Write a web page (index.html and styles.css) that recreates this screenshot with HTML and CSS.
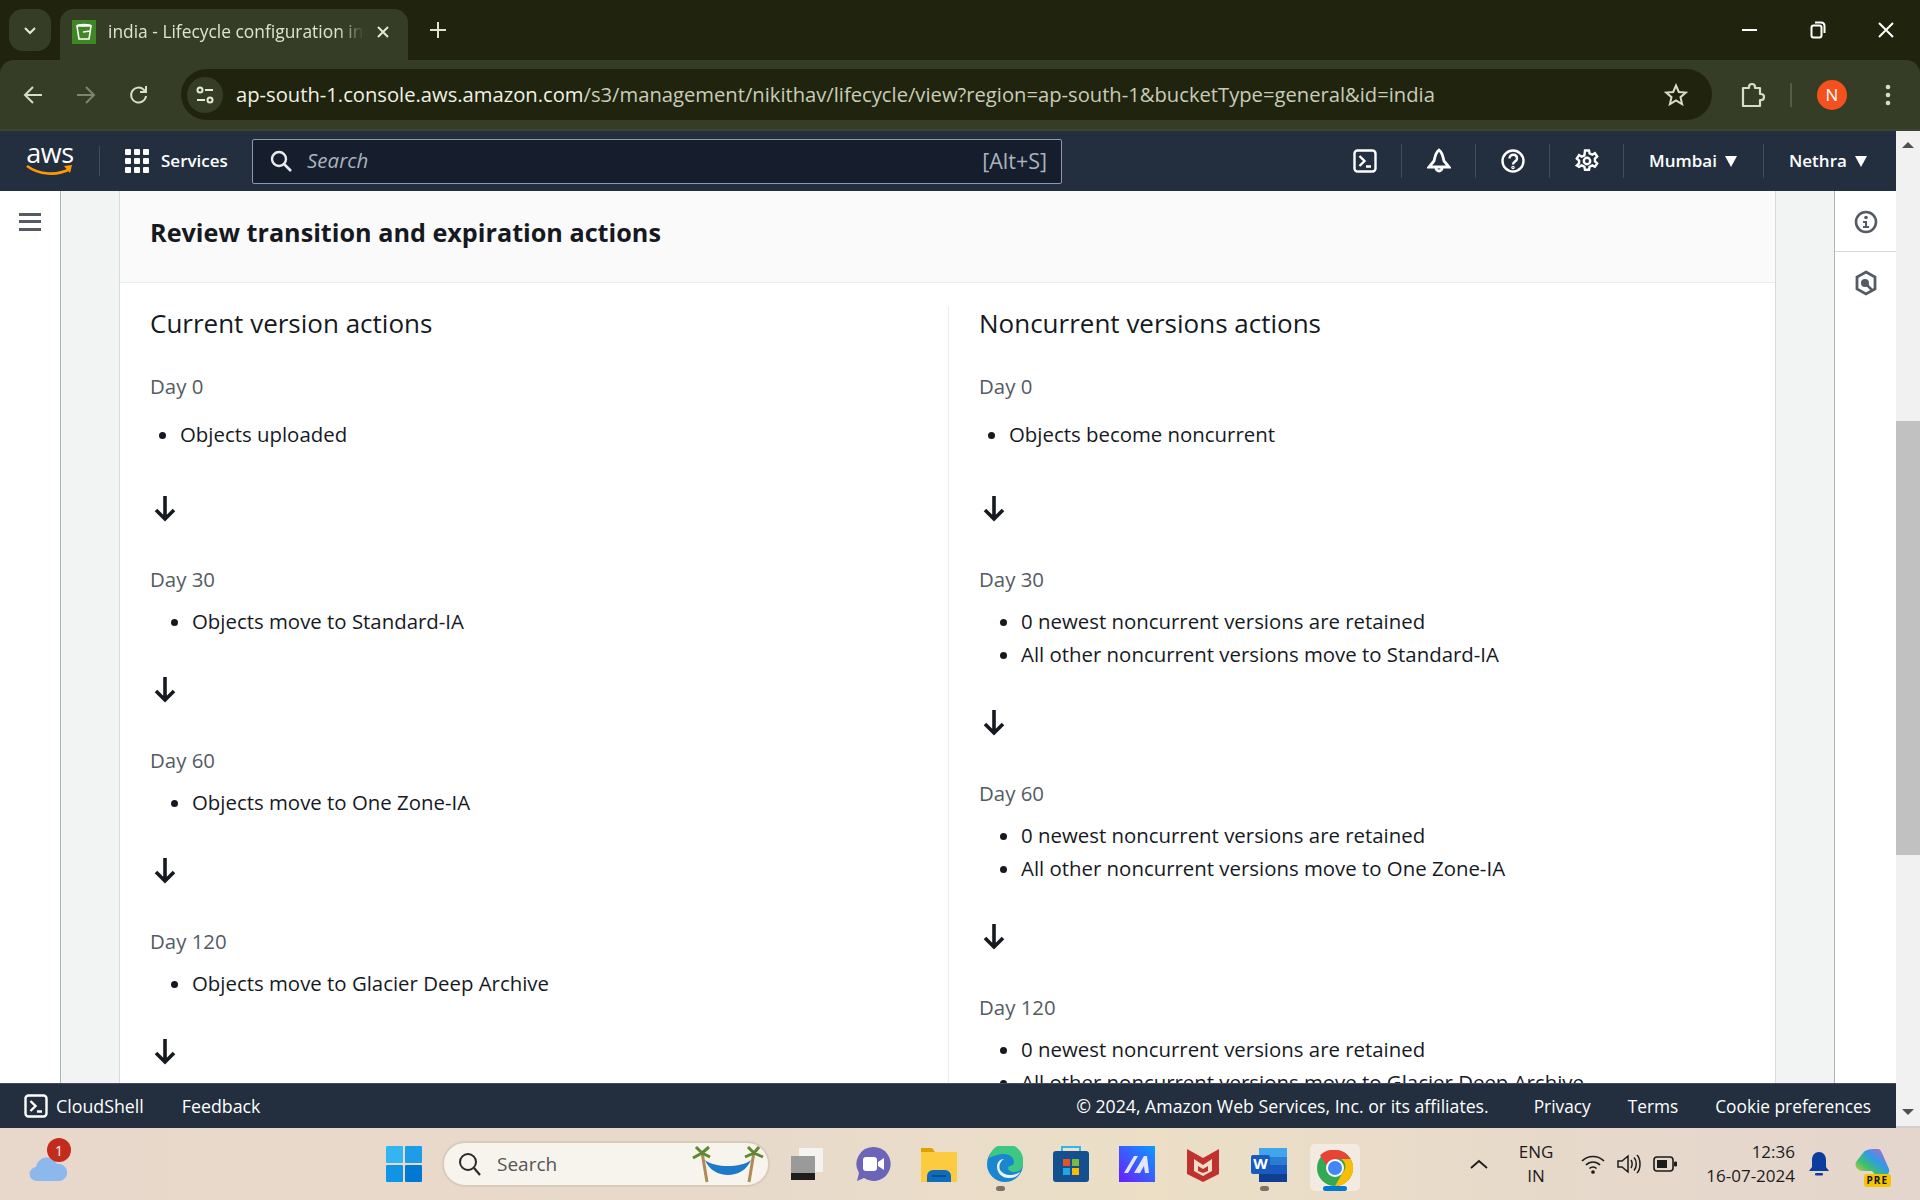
FILE: index.html
```html
<!DOCTYPE html>
<html lang="en">
<head>
  <meta charset="UTF-8">
  <title>india - Lifecycle configuration in S3</title>
  <link rel="stylesheet" href="styles.css">
</head>
<body>
  <div class="screen">
    <!-- browser tabs -->
    <div class="tabstrip">
      <div class="tab-search"><svg width="16" height="16" viewBox="0 0 16 16"><path d="M3 6l5 5 5-5" fill="none" stroke="#e6e8d8" stroke-width="2"/></svg></div>
      <div class="tab">
        <svg class="favicon" width="24" height="24" viewBox="0 0 24 24"><rect width="24" height="24" fill="#3f8624"/><path d="M5 6h14l-2 13H7zM5 6c0-2 14-2 14 0M11 12l7-1" fill="none" stroke="#fff" stroke-width="1.6"/></svg>
        <span class="tab-title">india - Lifecycle configuration in S3</span>
        <svg class="tab-close" width="14" height="14" viewBox="0 0 14 14"><path d="M2 2l10 10M12 2L2 12" stroke="#e6e8d8" stroke-width="2"/></svg>
      </div>
      <svg class="new-tab" width="18" height="18" viewBox="0 0 18 18"><path d="M9 1v16M1 9h16" stroke="#dfe2cf" stroke-width="2"/></svg>
      <div class="window-btns">
        <svg width="16" height="16" viewBox="0 0 16 16"><path d="M0 8h15" stroke="#fff" stroke-width="2"/></svg>
        <svg width="16" height="18" viewBox="0 0 16 18"><rect x="1.500" y="4.500" width="10" height="12" rx="2" fill="none" stroke="#fff" stroke-width="2"/><path d="M5 1.500h6c2 0 3.500 1.500 3.500 3.500v7" fill="none" stroke="#fff" stroke-width="2"/></svg>
        <svg width="16" height="16" viewBox="0 0 16 16"><path d="M1 1l14 14M15 1L1 15" stroke="#fff" stroke-width="2"/></svg>
      </div>
    </div>

    <!-- browser toolbar -->
    <div class="toolbar">
      <svg class="tool-back" width="20" height="20" viewBox="0 0 20 20"><path d="M19 10H2M10 2l-8 8 8 8" fill="none" stroke="#d9dcc8" stroke-width="2"/></svg>
      <svg class="tool-forward" width="20" height="20" viewBox="0 0 20 20"><path d="M1 10h17M10 2l8 8-8 8" fill="none" stroke="#80856f" stroke-width="2"/></svg>
      <svg class="tool-reload" width="20" height="20" viewBox="0 0 20 20"><path d="M17 11a7.500 7.500 0 1 1-2.200-6.300L17 7M17 1v6h-6" fill="none" stroke="#d9dcc8" stroke-width="2"/></svg>
      <div class="urlbar">
        <div class="site-info"><svg width="20" height="20" viewBox="0 0 20 20" fill="none" stroke="#e6e8d8" stroke-width="2"><circle cx="5" cy="5" r="2.500"/><path d="M10 5h8M2 15h8"/><circle cx="15" cy="15" r="2.500"/></svg></div>
        <span class="url">ap-south-1.console.aws.amazon.com<span class="url-path">/s3/management/nikithav/lifecycle/view?region=ap-south-1&amp;bucketType=general&amp;id=india</span></span>
        <svg class="star" width="24" height="24" viewBox="0 0 24 24"><path d="M12 2.500l2.800 6.500 7 .6-5.300 4.600 1.600 6.900-6.100-3.700-6.100 3.700 1.600-6.900-5.300-4.600 7-.6z" fill="none" stroke="#d9dcc8" stroke-width="2"/></svg>
      </div>
      <svg class="puzzle" width="26" height="26" viewBox="0 0 26 26"><path d="M4 6h6V5a3 3 0 0 1 6 0v1h5v6h1a3 3 0 0 1 0 6h-1v6H4z" fill="none" stroke="#d9dcc8" stroke-width="2.200" stroke-linejoin="round"/></svg>
      <span class="tool-sep"></span>
      <span class="avatar">N</span>
      <svg class="kebab" width="6" height="24" viewBox="0 0 6 24" fill="#d9dcc8"><circle cx="3" cy="4" r="2.300"/><circle cx="3" cy="12" r="2.300"/><circle cx="3" cy="20" r="2.300"/></svg>
    </div>

    <div class="viewport">
      <div class="app">
        <!-- aws top nav -->
        <header class="topnav">
          <div class="aws-logo">
            <span class="aws-word">aws</span>
            <svg width="50" height="13" viewBox="0 0 50 13"><path d="M2 2c12 9 30 10 43 3" fill="none" stroke="#ff9900" stroke-width="2.600"/><path d="M39 2l8-1-2 8z" fill="#ff9900"/></svg>
          </div>
          <span class="nav-sep logo-sep"></span>
          <svg class="grid-icon" width="24" height="24" viewBox="0 0 24 24" fill="#fff"><rect width="6" height="6" rx="1"/><rect x="9" width="6" height="6" rx="1"/><rect x="18" width="6" height="6" rx="1"/><rect y="9" width="6" height="6" rx="1"/><rect x="9" y="9" width="6" height="6" rx="1"/><rect x="18" y="9" width="6" height="6" rx="1"/><rect y="18" width="6" height="6" rx="1"/><rect x="9" y="18" width="6" height="6" rx="1"/><rect x="18" y="18" width="6" height="6" rx="1"/></svg>
          <span class="services">Services</span>
          <div class="searchbox">
            <svg width="22" height="22" viewBox="0 0 22 22"><circle cx="9" cy="9" r="7" fill="none" stroke="#e9ebed" stroke-width="2.400"/><path d="M14 14l7 7" stroke="#e9ebed" stroke-width="2.600"/></svg>
            <span class="search-hint">Search</span>
            <span class="search-key">[Alt+S]</span>
          </div>
          <div class="nav-right">
            <div class="nav-icon"><svg width="24" height="24" viewBox="0 0 24 24" fill="none" stroke="#fff" stroke-width="2.400"><rect x="1.500" y="1.500" width="21" height="21" rx="3"/><path d="M6.500 7l5 5-5 5M13 17.500h5"/></svg></div>
            <div class="nav-icon"><svg width="24" height="26" viewBox="0 0 24 26" fill="none" stroke="#fff" stroke-width="2.800"><path d="M12 2c4 3 4 8 5 11l5 6H2l5-6c1-3 1-8 5-11zM9 20a3 3 0 0 0 6 0"/></svg></div>
            <div class="nav-icon"><svg width="24" height="24" viewBox="0 0 24 24" fill="none" stroke="#fff" stroke-width="2.400"><circle cx="12" cy="12" r="10.500"/><path d="M8.500 9.500c0-5 7.500-5 7.500 0 0 3-4 3-4 6"/><circle cx="12" cy="18.500" r=".6"/></svg></div>
            <div class="nav-icon"><svg width="24" height="24" viewBox="0 0 24 24" fill="none" stroke="#fff" stroke-width="2.400"><circle cx="12" cy="12" r="3.200"/><path d="M10 1.500h4l.6 3 2.600 1.200 2.700-1.500 2.300 3.400-2.300 2 .1 2.800 2.200 2-2.300 3.400-2.700-1.400-2.600 1.300-.6 3.100h-4l-.6-3.100-2.600-1.300-2.700 1.400L1.800 16.400l2.200-2 .1-2.800-2.300-2 2.300-3.400 2.700 1.500 2.600-1.200z"/></svg></div>
            <div class="nav-menu region"><span class="nav-label">Mumbai</span> <span class="caret"></span></div>
            <div class="nav-menu user"><span class="nav-label">Nethra</span> <span class="caret"></span></div>
          </div>
        </header>

        <div class="workspace">
          <aside class="side-left">
            <svg width="22" height="18" viewBox="0 0 22 18" fill="#545b64"><rect width="22" height="3"/><rect y="7" width="22" height="3"/><rect y="15" width="22" height="3"/></svg>
          </aside>

          <main class="content">
            <section class="panel">
              <div class="panel-head"><h2>Review transition and expiration actions</h2></div>
              <div class="columns">
                <div class="col">
                  <h3>Current version actions</h3>
                  <div class="step first">
                    <div class="day">Day 0</div>
                    <ul class="first-list"><li>Objects uploaded</li></ul>
                  </div>
                  <svg class="arrow first-arrow" width="22" height="26" viewBox="0 0 22 26"><path d="M11 0v23M2 14l9 9 9-9" fill="none" stroke="#16191f" stroke-width="3.600"/></svg>
                  <div class="step">
                    <div class="day">Day 30</div>
                    <ul><li>Objects move to Standard-IA</li></ul>
                  </div>
                  <svg class="arrow" width="22" height="26" viewBox="0 0 22 26"><path d="M11 0v23M2 14l9 9 9-9" fill="none" stroke="#16191f" stroke-width="3.600"/></svg>
                  <div class="step">
                    <div class="day">Day 60</div>
                    <ul><li>Objects move to One Zone-IA</li></ul>
                  </div>
                  <svg class="arrow" width="22" height="26" viewBox="0 0 22 26"><path d="M11 0v23M2 14l9 9 9-9" fill="none" stroke="#16191f" stroke-width="3.600"/></svg>
                  <div class="step">
                    <div class="day">Day 120</div>
                    <ul><li>Objects move to Glacier Deep Archive</li></ul>
                  </div>
                  <svg class="arrow" width="22" height="26" viewBox="0 0 22 26"><path d="M11 0v23M2 14l9 9 9-9" fill="none" stroke="#16191f" stroke-width="3.600"/></svg>
                </div>
                <div class="col col-right">
                  <h3>Noncurrent versions actions</h3>
                  <div class="step first">
                    <div class="day">Day 0</div>
                    <ul class="first-list"><li>Objects become noncurrent</li></ul>
                  </div>
                  <svg class="arrow first-arrow" width="22" height="26" viewBox="0 0 22 26"><path d="M11 0v23M2 14l9 9 9-9" fill="none" stroke="#16191f" stroke-width="3.600"/></svg>
                  <div class="step">
                    <div class="day">Day 30</div>
                    <ul>
                      <li>0 newest noncurrent versions are retained</li>
                      <li>All other noncurrent versions move to Standard-IA</li>
                    </ul>
                  </div>
                  <svg class="arrow" width="22" height="26" viewBox="0 0 22 26"><path d="M11 0v23M2 14l9 9 9-9" fill="none" stroke="#16191f" stroke-width="3.600"/></svg>
                  <div class="step">
                    <div class="day">Day 60</div>
                    <ul>
                      <li>0 newest noncurrent versions are retained</li>
                      <li>All other noncurrent versions move to One Zone-IA</li>
                    </ul>
                  </div>
                  <svg class="arrow" width="22" height="26" viewBox="0 0 22 26"><path d="M11 0v23M2 14l9 9 9-9" fill="none" stroke="#16191f" stroke-width="3.600"/></svg>
                  <div class="step">
                    <div class="day">Day 120</div>
                    <ul>
                      <li>0 newest noncurrent versions are retained</li>
                      <li>All other noncurrent versions move to Glacier Deep Archive</li>
                    </ul>
                  </div>
                </div>
              </div>
            </section>
          </main>

          <aside class="side-right">
            <div class="rail-btn"><svg width="24" height="24" viewBox="0 0 24 24"><circle cx="12" cy="12" r="10" fill="none" stroke="#545b64" stroke-width="2.600"/><circle cx="12" cy="7.500" r="1.800" fill="#545b64"/><path d="M9 11h4v5h2v2H9v-2h2v-3H9z" fill="#545b64"/></svg></div>
            <div class="rail-btn"><svg width="24" height="26" viewBox="0 0 24 26"><path d="M12 2l9 5v12l-9 5-9-5V7z" fill="none" stroke="#545b64" stroke-width="2.800"/><circle cx="11" cy="13" r="4" fill="#545b64"/><path d="M13 15l5 5" stroke="#545b64" stroke-width="2.500"/></svg></div>
          </aside>
        </div>

        <footer class="footer">
          <svg width="24" height="24" viewBox="0 0 24 24" fill="none" stroke="#fff" stroke-width="2.400"><rect x="1.500" y="1.500" width="21" height="21" rx="3"/><path d="M6.500 7l5 5-5 5M13 17.500h5"/></svg>
          <span class="foot-shell">CloudShell</span>
          <span class="foot-feedback">Feedback</span>
          <div class="foot-right">
            <span class="foot-copy">© 2024, Amazon Web Services, Inc. or its affiliates.</span>
            <span>Privacy</span>
            <span>Terms</span>
            <span>Cookie preferences</span>
          </div>
        </footer>
      </div>

      <div class="scrollbar">
        <span class="scroll-up"></span>
        <div class="scroll-track"><div class="scroll-thumb"></div></div>
        <span class="scroll-down"></span>
      </div>
    </div>

    <!-- windows taskbar -->
    <div class="taskbar">
      <div class="weather">
        <svg width="38" height="26" viewBox="0 0 38 26"><path d="M8 25a7 7 0 0 1-1-14 11 11 0 0 1 21-3 8.500 8.500 0 0 1 3 17z" fill="#8db8ee"/></svg>
        <span class="weather-badge">1</span>
      </div>
      <svg class="start" width="36" height="36" viewBox="0 0 36 36"><rect width="17" height="17" rx="1" fill="#33b5f1"/><rect x="19" width="17" height="17" rx="1" fill="#1f9ce8"/><rect y="19" width="17" height="17" rx="1" fill="#1294e6"/><rect x="19" y="19" width="17" height="17" rx="1" fill="#0078d4"/></svg>
      <div class="task-search">
        <svg width="24" height="24" viewBox="0 0 24 24"><circle cx="10" cy="10" r="8" fill="none" stroke="#2b2b2b" stroke-width="2"/><path d="M16 16l6 7" stroke="#2b2b2b" stroke-width="2.200"/></svg>
        <span>Search</span>
        <svg class="hammock" width="72" height="40" viewBox="0 0 72 40"><path d="M10 8l5 30M62 8l-5 30" stroke="#b08a55" stroke-width="3"/><path d="M13 16c8 20 38 20 46 0-10 8-36 8-46 0z" fill="#1f78c8"/><path d="M10 9L1 14M10 9l8 4M10 9L4 3M10 9l7-6M62 9l-9 4M62 9l9 4M62 9l-6-6M62 9l5-6" stroke="#5d8a2e" stroke-width="3"/></svg>
      </div>
      <svg class="task-app taskview" width="36" height="36" viewBox="0 0 36 36"><rect x="10" y="2" width="24" height="24" fill="#f4f3f0"/><rect x="2" y="10" width="24" height="24" fill="#9a9a9a"/><rect x="2" y="27" width="24" height="7" fill="#1e1e1e"/></svg>
      <svg class="task-app" width="36" height="36" viewBox="0 0 36 36"><path d="M18 1a17 17 0 1 1-9 31l-7 3 2-8A17 17 0 0 1 18 1z" fill="#6b64b8"/><rect x="8" y="11" width="14" height="14" rx="3" fill="#fff"/><path d="M23 16l6-4v12l-6-4z" fill="#fff"/></svg>
      <svg class="task-app" width="36" height="36" viewBox="0 0 36 36"><path d="M0 2h11l3 4h22v30H0z" fill="#e0a100"/><rect y="6" width="36" height="30" fill="#fdcb3f"/><path d="M6 36v-6a6 6 0 0 1 6-6h12a6 6 0 0 1 6 6v6z" fill="#0f6cbd"/><rect x="11" y="29" width="14" height="2" fill="#0b4f8a"/></svg>
      <div class="task-slot">
        <svg class="task-app" width="36" height="36" viewBox="0 0 36 36"><circle cx="18" cy="18" r="18" fill="#1a86d0"/><path d="M2 12A17 17 0 0 1 36 18c0 5-4 8-9 8-3 0-6-2-6-4 0-3 6-1 6-6 0-5-5-8-10-8S6 10 2 12z" fill="#3cc884"/><path d="M13 24a9 9 0 0 1 4-11c-4 0-7 3-7 8 0 6 6 12 13 11 5 0 9-3 10-6-3 2-6 3-10 3-4 0-8-2-10-5z" fill="#fff" opacity=".9"/></svg>
        <span class="running"></span>
      </div>
      <svg class="task-app" width="36" height="36" viewBox="0 0 36 36"><rect y="5" width="36" height="31" rx="3" fill="#144f8e"/><path d="M9 5V1h18v4" fill="none" stroke="#33b5f1" stroke-width="2"/><rect x="10" y="13" width="7" height="7" fill="#e5532d"/><rect x="19" y="13" width="7" height="7" fill="#7cb93f"/><rect x="10" y="22" width="7" height="7" fill="#1fa8e8"/><rect x="19" y="22" width="7" height="7" fill="#fdb900"/></svg>
      <svg class="task-app" width="36" height="36" viewBox="0 0 36 36"><defs><linearGradient id="mgrad" x1="0" y1="1" x2="1" y2="0"><stop offset="0" stop-color="#6a1cff"/><stop offset="1" stop-color="#0a9cff"/></linearGradient></defs><rect width="36" height="36" fill="url(#mgrad)"/><path d="M5 27L15 10h4L9 27zM15 27L25 10h3l2 17h-4l-1-7-4 7z" fill="#e4e6ff"/></svg>
      <svg class="task-app" width="36" height="36" viewBox="0 0 36 36"><path d="M2 3l16 9 16-9v25l-16 8-16-8z" fill="#c0322e"/><path d="M9 13l9 6 9-6v12l-9 5-9-5z" fill="#ecdfc6"/><path d="M13 20l5 3 5-3v5l-5 2-5-2z" fill="#c0322e"/></svg>
      <div class="task-slot">
        <svg class="task-app" width="36" height="36" viewBox="0 0 36 36"><rect x="8" y="2" width="28" height="34" rx="2" fill="#2b7cd3"/><rect x="8" y="2" width="28" height="9" fill="#41a5ee"/><rect x="8" y="19" width="28" height="9" fill="#185abd"/><rect x="8" y="28" width="28" height="8" fill="#103f91"/><rect y="9" width="19" height="19" rx="2" fill="#185abd"/><text x="9.500" y="23" class="word-w" text-anchor="middle">W</text></svg>
        <span class="running"></span>
      </div>
      <div class="task-slot active">
        <svg width="36" height="36" viewBox="0 0 36 36"><circle cx="18" cy="18" r="18" fill="#34a853"/><path d="M18 0a18 18 0 0 1 15.600 9H18a9 9 0 0 0-8.500 6L3 5.500A18 18 0 0 1 18 0z" fill="#ea4335"/><path d="M33.600 9A18 18 0 0 1 18 36l7.500-13a9 9 0 0 0-1-14z" fill="#fbbc04"/><circle cx="18" cy="18" r="9" fill="#fff"/><circle cx="18" cy="18" r="7" fill="#4285f4"/></svg>
        <span class="running wide"></span>
      </div>
      <div class="tray">
        <svg class="tray-up" width="18" height="10" viewBox="0 0 18 10"><path d="M1 9l8-7 8 7" fill="none" stroke="#1c1c1c" stroke-width="1.800"/></svg>
        <div class="lang"><div>ENG</div><div>IN</div></div>
        <svg width="24" height="20" viewBox="0 0 24 20" fill="none" stroke="#1c1c1c" stroke-width="1.700"><path d="M1 7c6-6 16-6 22 0M5 11c4-4 10-4 14 0M8.500 14.500c2-2 5-2 7 0"/><circle cx="12" cy="18" r="1" fill="#1c1c1c"/></svg>
        <svg width="24" height="22" viewBox="0 0 24 22" fill="none" stroke="#1c1c1c" stroke-width="1.500"><path d="M1 8h4l6-5v16l-6-5H1zM14 7c1.500 2 1.500 6 0 8M17 4.500c3 3 3 10 0 13M20 2c4 4 4 14 0 18"/></svg>
        <svg width="24" height="16" viewBox="0 0 24 16"><rect x="1" y="1" width="19" height="14" rx="3" fill="none" stroke="#1c1c1c" stroke-width="1.600"/><rect x="4" y="4" width="10" height="8" fill="#1c1c1c"/><rect x="21" y="5.500" width="3" height="5" rx="1" fill="#1c1c1c"/></svg>
        <div class="clock"><div>12:36</div><div>16-07-2024</div></div>
        <svg class="tray-bell" width="20" height="26" viewBox="0 0 20 26" fill="#0a3d9c"><path d="M10 1c4 0 7 3 7 8v7l3 4H0l3-4V9c0-5 3-8 7-8z"/><rect x="6" y="22" width="8" height="2.500" rx="1"/></svg>
        <div class="copilot">
          <svg width="35" height="30" viewBox="0 0 35 30"><defs><linearGradient id="cgrad" x1="0" y1="1" x2="1" y2="0"><stop offset="0" stop-color="#f6c93f"/><stop offset=".35" stop-color="#3fc06b"/><stop offset=".6" stop-color="#2f9be8"/><stop offset="1" stop-color="#d65ac8"/></linearGradient></defs><path d="M8 4c2-3 6-4 10-4h5c2 0 3 2 4 4l7 16c1 4-2 8-6 8h-6l-5-6H8c-5 0-9-4-7-9z" fill="url(#cgrad)"/></svg>
          <span class="pre">PRE</span>
        </div>
      </div>
    </div>
  </div>
</body>
</html>
```

FILE: styles.css
```css
* {
  box-sizing: border-box;
}
html, body {
  margin: 0;
  padding: 0;
  height: 100%;
  overflow: hidden;
}
body {
  font-family: "Open Sans", "Noto Sans", sans-serif;
  color: #16191f;
  background: #20240f;
}
svg {
  flex: none;
  display: block;
}
.screen {
  width: 1920px;
  height: 1200px;
  display: flex;
  flex-direction: column;
}

/* browser */
.tabstrip {
  height: 60px;
  background: #20240f;
  display: flex;
  align-items: flex-end;
  flex: none;
  padding-left: 9px;
}
.tab-search {
  width: 42px;
  height: 42px;
  margin-bottom: 9px;
  border-radius: 14px;
  background: #363d27;
  display: flex;
  align-items: center;
  justify-content: center;
}
.tab {
  width: 348px;
  height: 51px;
  margin-left: 9px;
  background: #363d27;
  border-radius: 14px 14px 0 0;
  display: flex;
  align-items: center;
  padding: 0 16px 6px 12px;
}
.tab-title {
  margin: 0 0 2px 12px;
  width: 256px;
  font-size: 17.4px;
  color: #dfe2cf;
  white-space: nowrap;
  overflow: hidden;
  -webkit-mask-image: linear-gradient(to right, #000 90%, transparent 100%);
  mask-image: linear-gradient(to right, #000 90%, transparent 100%);
}
.tab-close {
  margin-left: 12px;
}
.new-tab {
  margin: 0 0 21px 21px;
}
.window-btns {
  margin-left: auto;
  display: flex;
  align-items: center;
  align-self: center;
  gap: 52px;
  padding-right: 26px;
}
.toolbar {
  height: 71px;
  background: #363d27;
  border-bottom: 2px solid #3e4632;
  border-radius: 14px 14px 0 0;
  display: flex;
  align-items: center;
  flex: none;
  padding-left: 23px;
}
.tool-forward {
  margin-left: 33px;
}
.tool-reload {
  margin-left: 33px;
}
.urlbar {
  margin-left: 32px;
  width: 1531px;
  height: 51px;
  border-radius: 26px;
  background: #20240f;
  display: flex;
  align-items: center;
  padding: 0 24px 0 6px;
}
.site-info {
  width: 36px;
  height: 36px;
  border-radius: 50%;
  background: #363d27;
  display: flex;
  align-items: center;
  justify-content: center;
}
.url {
  margin: 0 0 2px 13px;
  font-size: 20.2px;
  color: #f0f1e4;
  white-space: nowrap;
}
.url-path {
  color: #c9ccb8;
}
.star {
  margin-left: auto;
}
.puzzle {
  margin-left: 27px;
}
.tool-sep {
  width: 2px;
  height: 24px;
  background: #565c45;
  margin-left: 25px;
}
.avatar {
  width: 30px;
  height: 30px;
  margin-left: 25px;
  border-radius: 50%;
  background: #f4511e;
  color: #fff;
  font-size: 17px;
  display: flex;
  align-items: center;
  justify-content: center;
}
.kebab {
  margin-left: 38px;
}

.viewport {
  flex: 1;
  display: flex;
  min-height: 0;
}
.app {
  width: 1896px;
  display: flex;
  flex-direction: column;
}

/* aws nav */
.topnav {
  height: 60px;
  background: #232f3e;
  display: flex;
  align-items: center;
  flex: none;
  padding-left: 25px;
  color: #fff;
  font-size: 17px;
}
.aws-logo {
  width: 50px;
  display: flex;
  flex-direction: column;
  align-items: center;
  line-height: 1;
}
.aws-word {
  font-size: 27px;
  line-height: 22px;
  margin-top: -4px;
  letter-spacing: -.5px;
}
.nav-sep {
  width: 1px;
  height: 30px;
  background: #414d5c;
}
.logo-sep {
  margin-left: 24px;
}
.grid-icon {
  margin-left: 25px;
}
.services {
  margin: 0 0 2px 12px;
  font-weight: 600;
  width: 67px;
  white-space: nowrap;
}
.searchbox {
  margin-left: 24px;
  width: 810px;
  height: 45px;
  background: #161e2d;
  border: 1px solid #8d99a8;
  border-radius: 2px;
  display: flex;
  align-items: center;
  padding: 0 14px 0 17px;
}
.search-hint {
  margin: 0 0 2px 15px;
  font-style: italic;
  color: #aab3bd;
  font-size: 20.5px;
}
.search-key {
  margin: 0 0 2px auto;
  color: #aab3bd;
  font-size: 21.5px;
}
.nav-right {
  margin-left: auto;
  display: flex;
  align-items: center;
}
.nav-icon {
  height: 34px;
  width: 74px;
  border-right: 1px solid #414d5c;
  display: flex;
  align-items: center;
  justify-content: center;
}
.nav-menu {
  height: 34px;
  display: flex;
  align-items: center;
  gap: 8px;
  white-space: nowrap;
  font-weight: 600;
}
.nav-label {
  margin-bottom: 2px;
}
.region {
  width: 140px;
  padding-left: 25px;
  border-right: 1px solid #414d5c;
}
.user {
  width: 132px;
  padding-left: 25px;
}
.caret {
  width: 0;
  height: 0;
  border-left: 6.500px solid transparent;
  border-right: 6.500px solid transparent;
  border-top: 11px solid #fff;
}

/* page body */
.workspace {
  flex: 1;
  min-height: 0;
  display: flex;
  background: #f2f3f3;
}
.side-left {
  width: 61px;
  flex: none;
  background: #fff;
  border-right: 1px solid #aab7b8;
  padding: 22px 0 0 19px;
}
.content {
  flex: 1;
  min-width: 0;
  padding: 0 58px;
  overflow: hidden;
}
.panel {
  background: #fff;
  border-left: 1px solid #d5dbdb;
  border-right: 1px solid #d5dbdb;
  height: 100%;
  overflow: hidden;
}
.panel-head {
  height: 92px;
  background: #fafafa;
  border-bottom: 1px solid #eaeded;
  padding: 21px 30px 0;
}
h2 {
  margin: 0;
  font-size: 25.200px;
  line-height: 40px;
  font-weight: 700;
}
.columns {
  display: flex;
  padding-top: 24px;
}
.col {
  width: 829px;
  padding-left: 30px;
  border-right: 1px solid #eaeded;
}
.col-right {
  width: auto;
  flex: 1;
  border-right: 0;
}
h3 {
  margin: 0;
  font-size: 26px;
  line-height: 32px;
  font-weight: 400;
}
.step {
  padding-top: 4px;
}
.first {
  padding-top: 31px;
}
.day {
  font-size: 20.400px;
  line-height: 32px;
  color: #545b64;
}
ul {
  margin: 10px 0 0;
  padding: 0 0 0 42px;
  font-size: 20.400px;
  line-height: 33px;
}
.first-list {
  padding-left: 30px;
  margin-top: 16px;
}
.arrow {
  margin: 39px 0 37px 4px;
}
.first-arrow {
  margin-top: 45px;
  margin-bottom: 37px;
}

.side-right {
  width: 62px;
  flex: none;
  background: #fff;
  border-left: 1px solid #aab7b8;
}
.rail-btn {
  height: 61px;
  padding-top: 1px;
  display: flex;
  align-items: center;
  justify-content: center;
  border-bottom: 1px solid #d5dbdb;
}
.rail-btn:last-child {
  border-bottom: 0;
}

.footer {
  height: 45px;
  flex: none;
  background: #232f3e;
  border-top: 1px solid #414d5c;
  color: #fff;
  font-size: 17.800px;
  display: flex;
  align-items: center;
  padding: 0 25px 0 24px;
}
.foot-shell {
  margin-left: 8px;
}
.foot-feedback {
  margin-left: 38px;
}
.foot-right {
  margin-left: auto;
  display: flex;
  align-items: center;
  gap: 37px;
  font-size: 17.300px;
}
.foot-copy {
  margin-right: 8px;
  font-size: 17.700px;
}

/* scrollbar */
.scrollbar {
  width: 24px;
  background: #f1f1f1;
  display: flex;
  flex-direction: column;
  align-items: center;
  border-bottom: 2px solid #cfcfcf;
}
.scroll-up, .scroll-down {
  width: 0;
  height: 0;
  flex: none;
  border-left: 6px solid transparent;
  border-right: 6px solid transparent;
}
.scroll-up {
  margin-top: 11px;
  border-bottom: 6px solid #505050;
}
.scroll-down {
  margin-bottom: 11px;
  border-top: 6px solid #505050;
}
.scroll-track {
  flex: 1;
  width: 100%;
  padding-top: 273px;
}
.scroll-thumb {
  height: 434px;
  background: #c1c1c1;
}

/* taskbar */
.taskbar {
  height: 72px;
  flex: none;
  background: linear-gradient(90deg, #e8d8cb 0%, #e8dacb 40%, #ecdfc6 60%, #e6d8cb 85%, #e4d6cc 100%);
  display: flex;
  align-items: center;
  color: #1c1c1c;
  padding-left: 29px;
}
.weather {
  position: relative;
  width: 38px;
  height: 36px;
  padding-top: 10px;
}
.weather-badge {
  position: absolute;
  left: 18px;
  top: -8px;
  width: 24px;
  height: 24px;
  border-radius: 50%;
  background: #c42b1c;
  color: #fff;
  font-size: 14px;
  display: flex;
  align-items: center;
  justify-content: center;
}
.start {
  margin-left: 319px;
}
.task-search {
  margin-left: 20px;
  width: 328px;
  height: 46px;
  border-radius: 23px;
  background: #f7f3ed;
  border: 2px solid #d9ccbd;
  display: flex;
  align-items: center;
  padding: 0 4px 0 14px;
  font-size: 19px;
  color: #555;
}
.task-search span {
  margin-left: 15px;
}
.hammock {
  margin-left: auto;
}
.task-app {
  margin-left: 30px;
}
.taskview {
  margin-left: 19px;
}
.task-slot {
  position: relative;
}
.task-slot .task-app {
  margin-left: 30px;
}
.running {
  position: absolute;
  left: 39px;
  bottom: -9px;
  width: 9px;
  height: 5px;
  border-radius: 3px;
  background: #7b7466;
}
.active {
  margin-left: 23px;
  width: 50px;
  height: 47px;
  background: #f3ebe2;
  border-radius: 5px;
  display: flex;
  align-items: center;
  justify-content: center;
  align-self: flex-start;
  margin-top: 16px;
}
.running.wide {
  left: 13px;
  bottom: 0;
  width: 24px;
  background: #0078d4;
}
.word-w {
  font: 700 15px "Open Sans", sans-serif;
  fill: #fff;
}
.tray {
  margin-left: auto;
  display: flex;
  align-items: center;
  padding-right: 30px;
  font-size: 17px;
}
.tray-up {
  margin-right: 30px;
}
.lang {
  width: 36px;
  text-align: center;
  line-height: 24px;
  margin-right: 27px;
}
.tray svg + svg {
  margin-left: 12px;
}
.clock {
  width: 118px;
  text-align: right;
  line-height: 24px;
}
.tray-bell {
  margin-left: 14px;
}
.copilot {
  position: relative;
  margin-left: 26px;
}
.pre {
  position: absolute;
  right: -1px;
  bottom: -8px;
  padding: 0 3px;
  background: #f6c400;
  border-radius: 3px;
  font-size: 10px;
  font-weight: 700;
  letter-spacing: 1px;
  line-height: 13px;
  color: #111;
}
```
